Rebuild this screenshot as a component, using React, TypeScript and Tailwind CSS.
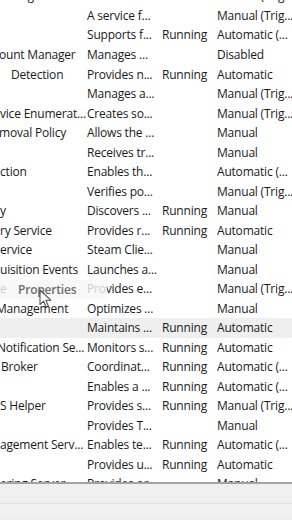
import React from 'react';

interface ServiceRow {
  name: string;
  nameClass: string;
  description: string;
  status: string;
  startup: string;
  selected?: boolean;
}

const rows: ServiceRow[] = [
  { name: 'itoring Service', nameClass: 'ml-[-1px]', description: 'Monitors va...', status: '', startup: 'Manual (Trig...' },
  { name: '', nameClass: '', description: 'A service f...', status: '', startup: 'Manual (Trig...' },
  { name: '', nameClass: '', description: 'Supports f...', status: 'Running', startup: 'Automatic (...' },
  { name: 'ount Manager', nameClass: 'ml-[-1px]', description: 'Manages ...', status: '', startup: 'Disabled' },
  { name: 'Detection', nameClass: 'ml-[11px]', description: 'Provides n...', status: 'Running', startup: 'Automatic' },
  { name: '', nameClass: '', description: 'Manages a...', status: '', startup: 'Manual (Trig...' },
  { name: 'vice Enumerat...', nameClass: 'ml-0', description: 'Creates so...', status: '', startup: 'Manual (Trig...' },
  { name: 'moval Policy', nameClass: 'ml-[-1px]', description: 'Allows the ...', status: '', startup: 'Manual' },
  { name: '', nameClass: '', description: 'Receives tr...', status: '', startup: 'Manual' },
  { name: 'ction', nameClass: 'ml-0', description: 'Enables th...', status: '', startup: 'Automatic (...' },
  { name: '', nameClass: '', description: 'Verifies po...', status: '', startup: 'Manual (Trig...' },
  { name: 'y', nameClass: 'ml-0', description: 'Discovers ...', status: 'Running', startup: 'Manual' },
  { name: 'ry Service', nameClass: 'ml-0', description: 'Provides r...', status: 'Running', startup: 'Automatic' },
  { name: 'ervice', nameClass: 'ml-0', description: 'Steam Clie...', status: '', startup: 'Manual' },
  { name: 'uisition Events', nameClass: 'ml-0', description: 'Launches a...', status: '', startup: 'Manual' },
  { name: 'e', nameClass: 'ml-0', description: 'Provides e...', status: '', startup: 'Manual (Trig...' },
  { name: 'Management', nameClass: 'ml-[-4px]', description: 'Optimizes ...', status: '', startup: 'Manual' },
  { name: '', nameClass: '', description: 'Maintains ...', status: 'Running', startup: 'Automatic', selected: true },
  { name: 'Notification Se...', nameClass: 'ml-[-3px]', description: 'Monitors s...', status: 'Running', startup: 'Automatic' },
  { name: 'Broker', nameClass: 'ml-[1px]', description: 'Coordinat...', status: 'Running', startup: 'Automatic (...' },
  { name: '', nameClass: '', description: 'Enables a ...', status: 'Running', startup: 'Automatic (...' },
  { name: 'S Helper', nameClass: 'ml-0', description: 'Provides s...', status: 'Running', startup: 'Manual (Trig...' },
  { name: '', nameClass: '', description: 'Provides T...', status: '', startup: 'Manual' },
  { name: 'agement Serv...', nameClass: 'ml-0', description: 'Enables te...', status: 'Running', startup: 'Automatic (...' },
  { name: '', nameClass: '', description: 'Provides u...', status: 'Running', startup: 'Automatic' },
  { name: 'ering Server', nameClass: 'ml-0', description: 'Provides or...', status: '', startup: 'Manual' },
];

const Cursor: React.FC = () => (
  <svg width="14" height="20" viewBox="0 0 14 20" className="absolute left-[39px] top-[289px]">
    <path
      d="M1 1 L1 15.5 L4.6 12.2 L7.2 18.2 L9.4 17.2 L6.9 11.4 L11.8 11.2 Z"
      fill="#fbfbfb"
      stroke="#3a3a3a"
      strokeWidth="1.1"
      strokeLinejoin="round"
      opacity="0.85"
    />
  </svg>
);

const App: React.FC = () => {
  return (
    <div className="relative w-[292px] h-[520px] overflow-hidden bg-white flex flex-col font-['Open_Sans',sans-serif] text-[12px] tracking-[-0.2px] text-[#1a1a1a]">
      <div className="relative flex-1 overflow-hidden">
        <div className="flex flex-col mt-[-13.3px]">
          {rows.map((row, i) => (
            <div key={i} className={`flex items-center h-[19.52px] whitespace-nowrap ${row.selected ? 'bg-[#efefef]' : ''}`}>
              <div className="w-[87px] shrink-0 overflow-hidden">
                <span className={`block ${row.nameClass}`}>{row.name}</span>
              </div>
              <div className="w-[75px] shrink-0 overflow-hidden">{row.description}</div>
              <div className="w-[55px] shrink-0 overflow-hidden">{row.status}</div>
              <div className="flex-1 overflow-hidden">{row.startup}</div>
            </div>
          ))}
        </div>

        {/* fading context menu item */}
        <div className="absolute left-0 top-[280px] w-[107px] h-[19px] bg-[#f6f6f6]/80 flex items-center">
          <span className="ml-[18px] font-semibold text-[#6e6e6e]">Properties</span>
        </div>
        <Cursor />
      </div>

      <div className="h-[38px] shrink-0 flex flex-col bg-[#f0f0f0]">
        <div className="h-[1.5px] bg-[#a3a3a3]" />
        <div className="h-[19px]" />
        <div className="h-px bg-[#e2e2e2]" />
        <div className="flex-1" />
        <div className="h-[3px] bg-[#e9ecf1]" />
      </div>
    </div>
  );
};

export default App;
